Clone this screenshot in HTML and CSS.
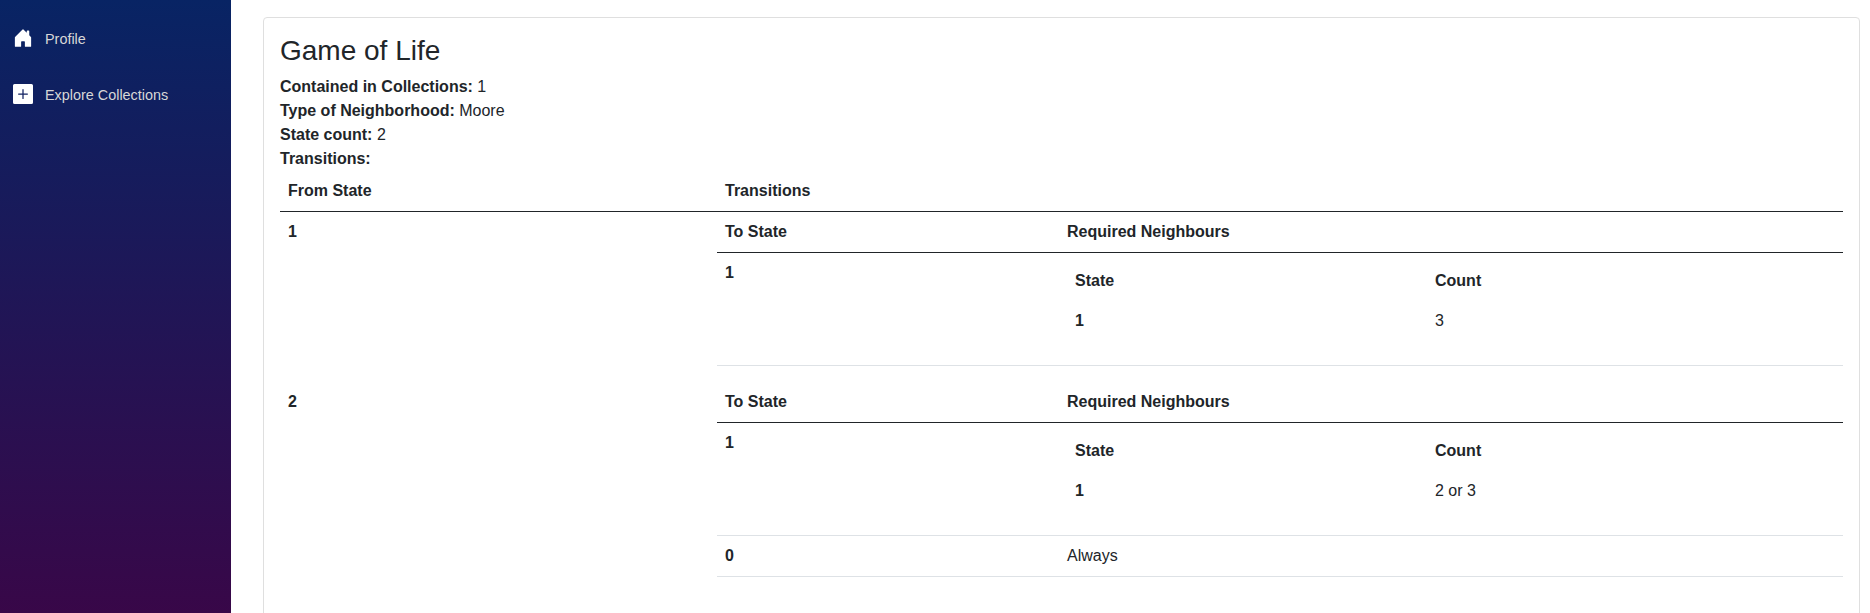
FILE: index.html
```html
<!DOCTYPE html>
<html lang="en">
<head>
<meta charset="utf-8">
<title>Game of Life</title>
<link rel="stylesheet" href="styles.css">
</head>
<body>
<div class="page">
  <nav class="sidebar">
    <a class="nav-link">
      <svg class="icon" viewBox="0 0 16 16" fill="currentColor"><path d="M6.5 14.5v-3.505c0-.245.25-.495.5-.495h2c.25 0 .5.25.5.5v3.5a.5.5 0 0 0 .5.5h4a.5.5 0 0 0 .5-.5v-7a.5.5 0 0 0-.146-.354L13 5.793V2.5a.5.5 0 0 0-.5-.5h-1a.5.5 0 0 0-.5.5v1.293L8.354 1.146a.5.5 0 0 0-.708 0l-6 6A.5.5 0 0 0 1.5 7.5v7a.5.5 0 0 0 .5.5h4a.5.5 0 0 0 .5-.5Z"/></svg>
      <span class="label">Profile</span>
    </a>
    <a class="nav-link">
      <svg class="icon" viewBox="0 0 16 16" fill="currentColor"><path d="M1.2 0A1.2 1.2 0 0 0 0 1.2v13.6A1.2 1.2 0 0 0 1.2 16h13.6a1.2 1.2 0 0 0 1.2-1.2V1.2A1.2 1.2 0 0 0 14.8 0H1.2zm7.3 4.5v3h3a.5.5 0 0 1 0 1h-3v3a.5.5 0 0 1-1 0v-3h-3a.5.5 0 0 1 0-1h3v-3a.5.5 0 0 1 1 0z"/></svg>
      <span class="label">Explore Collections</span>
    </a>
  </nav>
  <main class="content">
    <section class="card">
      <h3 class="title">Game of Life</h3>
      <div><b>Contained in Collections:</b> 1</div>
      <div><b>Type of Neighborhood:</b> Moore</div>
      <div><b>State count:</b> 2</div>
      <div><b>Transitions:</b></div>
      <table class="table">
        <colgroup><col class="col-from"><col></colgroup>
        <thead class="ruled"><tr><th>From State</th><th>Transitions</th></tr></thead>
        <tbody>
          <tr>
            <th>1</th>
            <td class="flush">
              <table class="table nested">
                <colgroup><col class="col-to"><col></colgroup>
                <thead class="ruled"><tr><th>To State</th><th>Required Neighbours</th></tr></thead>
                <tbody class="lined">
                  <tr>
                    <th>1</th>
                    <td>
                      <table class="table nested">
                        <colgroup><col class="col-state"><col></colgroup>
                        <thead><tr><th>State</th><th>Count</th></tr></thead>
                        <tbody class="plain"><tr><th>1</th><td>3</td></tr></tbody>
                      </table>
                    </td>
                  </tr>
                </tbody>
              </table>
            </td>
          </tr>
          <tr>
            <th>2</th>
            <td class="flush">
              <table class="table nested">
                <colgroup><col class="col-to"><col></colgroup>
                <thead class="ruled"><tr><th>To State</th><th>Required Neighbours</th></tr></thead>
                <tbody class="lined">
                  <tr>
                    <th>1</th>
                    <td>
                      <table class="table nested">
                        <colgroup><col class="col-state"><col></colgroup>
                        <thead><tr><th>State</th><th>Count</th></tr></thead>
                        <tbody class="plain"><tr><th>1</th><td>2 or 3</td></tr></tbody>
                      </table>
                    </td>
                  </tr>
                  <tr><th>0</th><td>Always</td></tr>
                </tbody>
              </table>
            </td>
          </tr>
        </tbody>
      </table>
    </section>
  </main>
</div>
</body>
</html>
```
FILE: styles.css
```css
* { box-sizing: border-box; }
body {
  margin: 0;
  font: 16px/1.5 "Liberation Sans", Arial, sans-serif;
  color: #212529;
  background: #fff;
}
.page { display: flex; height: 100vh; overflow: hidden; }
.sidebar {
  flex: 0 0 231px;
  padding-top: 14px;
  background: linear-gradient(180deg, #082464 0%, #3a0647 104%);
}
.nav-link {
  display: flex;
  align-items: center;
  gap: 12px;
  height: 48px;
  margin-bottom: 8px;
  padding-left: 13px;
  font-size: 14.4px;
  color: #d7d7d7;
}
.icon { width: 20px; height: 20px; color: #fff; }
.label { padding-top: 3px; }
.content { flex: 1; padding: 17px 10px 0 32px; }
.card {
  height: 700px;
  padding: 16px;
  border: 1px solid #dfdfdf;
  border-radius: 4px;
}
.title { margin: 0 0 7px; font-size: 28px; font-weight: 400; line-height: 1.2; }
.table {
  width: 100%;
  margin: 0 0 16px;
  table-layout: fixed;
  border-collapse: collapse;
}
.table th, .table td { padding: 8px; text-align: left; vertical-align: top; }
.table td.flush { padding: 0; }
.table .ruled > tr > th { border-bottom: 1px solid #212529; }
.table .lined > tr > * { border-bottom: 1px solid #dee2e6; }
.table .plain > tr > * { border-bottom: 0; }
.col-from { width: 437px; }
.col-to { width: 342px; }
.col-state { width: 360px; }
```
